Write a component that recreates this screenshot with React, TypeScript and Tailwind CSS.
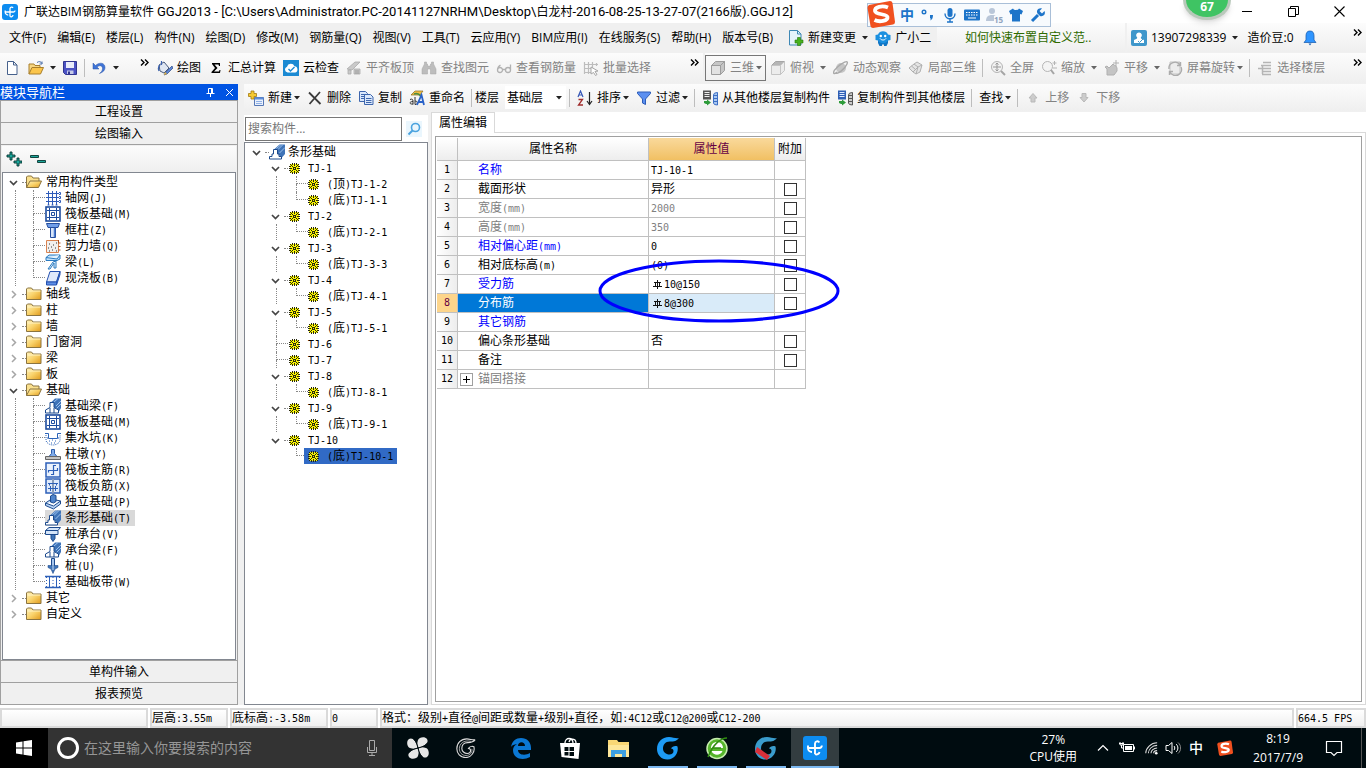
import { Fragment, useState } from 'react'
import type { ReactNode } from 'react'

const UI_FONT = "font-['Open_Sans','Noto_Sans_CJK_SC',sans-serif]"

// ---------- Icons ----------

function Svg({ children, size = 16, box = 16 }: { children: ReactNode; size?: number; box?: number }) {
  return (
    <svg width={size} height={size} viewBox={`0 0 ${box} ${box}`} fill="none" className="block shrink-0" aria-hidden="true">
      {children}
    </svg>
  )
}

const folderFill = (
  <defs>
    <linearGradient id="folder" x1="0" y1="0" x2="1" y2="1">
      <stop offset="0" stopColor="#fff3bd" />
      <stop offset=".5" stopColor="#f9d26a" />
      <stop offset="1" stopColor="#e09a1c" />
    </linearGradient>
  </defs>
)

const icons: Record<string, ReactNode> = {
  app: (
    <>
      <rect width="16" height="16" rx="3" fill="#0d8cf0" />
      <path d="M8 12.5V4.5a1.600 1.600 0 0 1 3-.6M3 8h8.500a1.500 1.500 0 0 0 1.500-1.500M3.200 6.500v1.500a3 3 0 0 0 3 3M8 12.500a2 2 0 0 0 3-1.500" stroke="#fff" strokeWidth="1.300" />
    </>
  ),
  // standard toolbar
  file: <path d="M3.500 1.500h6l3.500 3.500v9.500h-9.500zM9.500 1.500v3.500h3.500" fill="#fff" stroke="#47618c" />,
  open: (
    <>
      <path d="M1 14V4h5l1 1.500h5V8" fill="#f7d681" stroke="#a87f2c" />
      <path d="M1 14 4 7.500h11.500L12.500 14z" fill="#fbc54b" stroke="#a87f2c" />
      <path d="M9 2.500c2-1.500 4-1 5 1m0-2v2.500h-2.500" stroke="#4a6ea8" />
    </>
  ),
  save: (
    <>
      <path d="M1.500 1.500h13v13h-11l-2-2z" fill="#4b52c4" stroke="#31358f" />
      <path d="M4 2h8v6H4z" fill="#e9ecfa" />
      <path d="M5 10.500h6.500V14H5z" fill="#c6cbe8" />
      <path d="M6 11.500h2V14H6z" fill="#31358f" />
    </>
  ),
  undo: <path d="M2 3v6h6L6 7c3-2.500 5.500-1 5.500 1.500 0 2-1 3.500-3 5 4-1.500 5.500-3.500 5.500-6C14 3 9 1.500 4.500 5.500z" fill="#3f74d6" stroke="#2a55a8" strokeWidth=".5" />,
  draw: (
    <>
      <path d="M2 5l5-3 5 6-5 5-4-2z" fill="#dfe6f2" stroke="#47597d" />
      <path d="M3 5c-2 2-2 4-1 6M4.500 1v4" stroke="#3c62b0" strokeWidth="1.200" />
      <path d="M15 6 9 12l-2 3 3-1 6-6z" fill="#5c86d6" stroke="#2b4a85" strokeWidth=".7" />
      <path d="m7 15 3-1-2-2z" fill="#e3b13d" />
    </>
  ),
  sigma: <path d="M4 3h8v3h-1l-.5-1.500H6.500L9.500 8l-3.500 3.500h5L11.500 10h1l-.5 3H3.500v-1L7 8 4 4z" fill="#000" />,
  cloud: (
    <>
      <rect width="16" height="16" fill="#1b8ad3" />
      <path d="M4.500 12.500a3 3 0 0 1-.5-5.800 4 4 0 0 1 7.500-.5 3.200 3.200 0 0 1 .5 6.300z" fill="#fff" />
      <path d="m5.500 9 2 2 4-4" stroke="#1b8ad3" strokeWidth="1.400" />
    </>
  ),
  align: (
    <>
      <path d="M1 9 9 2h5L6 10zM2 10h3v4H2zM8 9h6v5H8z" fill="#c9c9c9" stroke="#ababab" strokeWidth=".8" />
      <path d="M10 10v4M12 10v4" stroke="#999" />
    </>
  ),
  binoc: <path d="M3.500 2h2v2h1v2h3V4h1V2h2v2l2.500 5v5H9.500V9h-3v5H1V9l2.500-5z" fill="#bdbdbd" stroke="#a5a5a5" strokeWidth=".5" />,
  glasses: <path d="M1.500 10a2.500 2.500 0 1 0 5 0 2.500 2.500 0 1 0-5 0 6 6 0 0 1 3-5M6.500 9.500h3m0 .5a2.500 2.500 0 1 0 5 0 2.500 2.500 0 1 0-5 0M14.500 10V4.500" stroke="#b1b1b1" strokeWidth="1.300" />,
  batch: (
    <>
      <path d="M1.500 2v12M5.500 2v12M9.500 2v6M1 4.500h14M1 8.500h8M1 12.500h8M13.500 3v3" stroke="#bdbdbd" strokeWidth="1.200" />
      <path d="m8 7 7 4-3 .5 2 3-1.500 1-2-3L8 14z" fill="#fff" stroke="#a5a5a5" />
    </>
  ),
  cube: (
    <>
      <path d="M1.500 5.500h9v9h-9z" fill="#e2e2e2" stroke="#9d9d9d" />
      <path d="m1.500 5.500 4-4h9l-4 4zM14.500 1.500v9l-4 4v-9z" fill="#c6c6c6" stroke="#9d9d9d" />
    </>
  ),
  topview: (
    <>
      <path d="m1.500 5.500 4-4h9l-4 4z" fill="#b5b5b5" stroke="#a5a5a5" />
      <path d="M1.500 5.500h9v9h-9zM14.500 1.500v9l-4 4v-9" fill="#ececec" stroke="#c4c4c4" />
    </>
  ),
  orbit: (
    <>
      <circle cx="8" cy="8" r="5" fill="#c6c6c6" />
      <path d="M4 12C0 16-1 12 4 7.500S16-1 14 4 4 15 2.500 13" stroke="#a9a9a9" strokeWidth="1.400" />
    </>
  ),
  local3d: <path d="m1 8 5-4 4 3-5 5zM6 4l3-2 5 3-4 2M14 5l-2 7-4 2-3-2M10 7l-2 7M3.500 6l4 3.500M5 12l-4-4" fill="#e4e4e4" stroke="#b0b0b0" />,
  fit: (
    <>
      <circle cx="7" cy="7" r="5.500" fill="#f2f2f2" stroke="#b5b5b5" />
      <path d="M7 3v8M3 7h8M5.500 4.500 7 3l1.500 1.500M5.500 9.500 7 11l1.500-1.500" stroke="#999" />
      <path d="m11 11 4 4" stroke="#a5a5a5" strokeWidth="2" />
    </>
  ),
  zoom: (
    <>
      <circle cx="6.500" cy="6.500" r="5" fill="#f4f4f4" stroke="#b5b5b5" />
      <path d="m10 10 3 4" stroke="#a5a5a5" strokeWidth="2" />
      <path d="M13.500 1v4M11.500 3h4M12 8h4" stroke="#b5b5b5" />
    </>
  ),
  pan: <path d="M3 15V9L1 7l2-1 2 2 4-4 1 1 2 1 1 2v3l-3 4zM12 0v6M9 3h6" fill="#c4c4c4" stroke="#b0b0b0" />,
  rotate: (
    <>
      <path d="M3 2h10v12H3z" fill="#ececec" stroke="#c4c4c4" />
      <path d="M2 9a6 6 0 0 1 11-4M14 7a6 6 0 0 1-11 5M13.500 2v3.500H10M2.500 15v-3.500H6" stroke="#acacac" strokeWidth="1.400" />
    </>
  ),
  floors: <path d="M6 2.500h8M4 5.500h10M1 8.500h13M5 11.500h9M5 14.500h9M5.500 6v8" stroke="#b5b5b5" strokeWidth="1.500" />,
  // component toolbar
  create: (
    <>
      <path d="M6.500 7.500h9v8h-9z" fill="#eaf1fc" stroke="#5577b5" />
      <path d="M6.500 7.500h9v2h-9z" fill="#5d8ddb" />
      <path d="M8 11.500h6M8 13.500h6" stroke="#8fb0e6" />
      <path d="M3 1h3v2.500h2.500v3H6V9H3V6.500H.5v-3H3z" fill="#f6c931" stroke="#a37a10" strokeWidth=".8" />
    </>
  ),
  del: <path d="M2 2.500 13.500 14M13 2 2.500 14" stroke="#3b3b3b" strokeWidth="1.800" />,
  copy: (
    <>
      <path d="M1.500 1.500h6l2 2v8h-8z" fill="#dbe8fb" stroke="#3e66ad" />
      <path d="M3 4.500h4M3 6.500h4M3 8.500h4" stroke="#3e66ad" />
      <path d="M6.500 4.500h6l2.500 2.500v7.500H6.500z" fill="#dbe8fb" stroke="#3e66ad" />
      <path d="M8 8.500h5.500M8 10.500h5.500M8 12.500h5.500" stroke="#3e66ad" />
    </>
  ),
  rename: (
    <>
      <path d="M2 5 6 1h8l-3 4z" fill="#f1bf45" stroke="#8a6a1e" strokeWidth=".7" />
      <path d="M5 4c3-1 6 0 7 3" stroke="#4d8d43" strokeWidth="1.500" />
      <path d="M1 9.500c2-1 3 0 3 1.500v3.500M4 11.500c-4 0-4 3 0 2.500M6 7v7.500c3 .5 3-4 0-3.500" stroke="#333" />
      <path d="m8 15 4.500-10L15 15M9.500 12h4.500" stroke="#2a62c8" strokeWidth="1.800" />
    </>
  ),
  sort: (
    <>
      <path d="M1 7 3.500 1 6 7M2 5h3" stroke="#3557b7" strokeWidth="1.200" />
      <path d="M1.500 9.500h4l-4 5.500h4.500" stroke="#a02c2c" strokeWidth="1.300" />
      <path d="M12.500 2v12M10 11l2.500 3.500L15 11" stroke="#222" strokeWidth="1.200" />
    </>
  ),
  filter: <path d="M1.500 2h13v1.500L9.500 9v5.500l-3-1.500V9l-5-5.500z" fill="#5b8ff0" stroke="#2c5cb8" />,
  copyFrom: (
    <>
      <path d="M1 .5h8v9H1z" fill="#555" />
      <path d="M2.500 2.500h5M2.500 4.500h5M2.500 6.500h5" stroke="#eee" />
      <path d="M15.500 2.500q-4 0-4 2.500v8q0 2 4 2zM12 5.500h4M12 8.500h4M12 11.500h4" fill="#a9c8f2" stroke="#3d6fc4" />
      <path d="M2 11h3V9.500l4 3-4 3V14H4l-2-1z" fill="#2d9b3a" />
    </>
  ),
  copyTo: (
    <>
      <path d="M1 .5h8v9H1z" fill="#2f5fb5" />
      <path d="M2.500 2.500h5M2.500 4.500h5M2.500 6.500h5" stroke="#dce8ff" />
      <path d="M15.500 2.500q-4 0-4 2.500v8q0 2 4 2zM12 5.500h4M12 8.500h4M12 11.500h4" fill="#ccc" stroke="#555" />
      <path d="M2 11h3V9.500l4 3-4 3V14H4l-2-1z" fill="#2d9b3a" />
    </>
  ),
  up: <path d="M8 3.500 12 8h-2v4H6V8H4z" fill="#ccc" stroke="#b9b9b9" />,
  down: <path d="M8 12 4 7.500h2v-4h4v4h2z" fill="#ccc" stroke="#b9b9b9" />,
  change: (
    <>
      <path d="M1.500.5h8l3.500 3.500v11H1.500z" fill="#e6f4fc" stroke="#3e88b5" />
      <path d="M9.500.5v3.500H13" stroke="#3e88b5" />
      <path d="M9.500 7.500h3v2.500H15v3h-2.500v2.500h-3V13H7v-3h2.500z" fill="#48b21f" stroke="#27750c" strokeWidth=".6" />
    </>
  ),
  mascot: (
    <>
      <path d="M3 9h10v4l-1.500 3H9v-1.500H7V16H4.500L3 13z" fill="#1176c4" />
      <path d="M.5 5 3 4.500a5.500 5.500 0 0 1 10 0l2.500.5v5L13 10.500a6 6 0 0 1-10 0L.5 10z" fill="#1b90e0" />
      <circle cx="5.800" cy="6" r="1.200" fill="#fff" />
      <circle cx="10.200" cy="6" r="1.200" fill="#fff" />
      <path d="M5 8.500c1.500 2 4.500 2 6 0" stroke="#fff" />
    </>
  ),
  user: (
    <>
      <rect width="16" height="16" rx="2" fill="#3f97cb" />
      <path d="M8 2.500a2.800 2.800 0 0 1 1.800 5c0 1 .5 1.500 3.200 2.500v3H3v-3c2.700-1 3.200-1.500 3.200-2.500A2.800 2.800 0 0 1 8 2.500" fill="#fff" />
      <path d="m7 11 1.500 1.500L12 9" stroke="#3f97cb" />
    </>
  ),
  bell: (
    <>
      <path d="M8 1c3 0 4 2 4 5v4l2 2.500H2L4 10V6c0-3 1-5 4-5" fill="#2f95ff" stroke="#1f62b3" strokeWidth=".8" />
      <path d="M6.500 13.500 8 15.500l1.500-2z" fill="#1f62b3" />
    </>
  ),
  search: (
    <>
      <rect width="16" height="16" fill="#eaf6fd" />
      <circle cx="9.500" cy="6.500" r="4" stroke="#4aa3df" strokeWidth="1.600" />
      <path d="m6.500 9.500-4 4" stroke="#4aa3df" strokeWidth="2" />
    </>
  ),
  // tree
  folder: (
    <>
      {folderFill}
      <path d="M.5 13.500V3l1-1h4l1.500 2h8v9.500z" fill="url(#folder)" stroke="#8b7440" />
      <path d="M1.500 5h13" stroke="#fff3c4" />
    </>
  ),
  folderOpen: (
    <>
      {folderFill}
      <path d="M.5 13.500V3l1-1h4l1.500 2h6v3" fill="#fae08e" stroke="#8b7440" />
      <path d="M.5 13.500 4 7h11.500l-3 6.500z" fill="url(#folder)" stroke="#8b7440" />
    </>
  ),
  axis: (
    <path d="M3.500 1v14M7.500 1v14M11.500 1v14M1 3.500h13M1 7.500h13M1 11.500h13M14 2.500h1.500v2H14M14 6.500h1.500v2H14M14 10.500h1.500v2H14M2.500 15h2M6.500 15h2M10.500 15h2" stroke="#2f5cba" />
  ),
  raft: (
    <>
      <rect x="1" y="1" width="14" height="14" fill="#fff" stroke="#1d4c9e" strokeWidth="1.600" />
      <path d="M4.500 2v12M11.500 2v12M2 4.500h12M2 11.500h12M6.500 6.500h3v3h-3z" stroke="#1d4c9e" />
    </>
  ),
  column: (
    <>
      <path d="M1.500 1.500h13l-1.500 4H3z" fill="#6f9de8" stroke="#234d9f" />
      <path d="M5.500 5.500h5v10h-5z" fill="#d8e6fa" stroke="#234d9f" />
      <path d="M9.500 6v9" stroke="#4a7bd0" strokeWidth="1.500" />
    </>
  ),
  shear: (
    <>
      <path d="M1.500 2.500h12v12h-12z" fill="#f1efed" stroke="#d9824f" />
      <path d="M4 6h1M8 7h1M11 5h1M6 9h1M3 10h1M10 10h1M7 12h1M4 13h1M11 13h1" stroke="#333" />
      <path d="M13.500 2v3h2M13.500 8.500h2M13.500 12h2" stroke="#b0501c" />
    </>
  ),
  beam: (
    <>
      <path d="M1 3.500 4 1h11v4l-3 1.500H1z" fill="#bfe0fa" stroke="#2a7ac0" />
      <path d="m3 15 5-7 3-1v7H9V9l-4 6zM1 3.500 12 5l3-4" stroke="#2a7ac0" fill="#e5f3fd" />
    </>
  ),
  slab: (
    <>
      <path d="M5 1.500h10L11.500 12h-10z" fill="#dfe9fb" stroke="#2450b0" />
      <path d="M1.500 12h10v3h-10zM11.500 12 15 1.500v3L11.500 15" fill="#5e8ee6" stroke="#2450b0" />
    </>
  ),
  strip: (
    <>
      <path d="M5.500 5 10.500.5H16V10l-3.500 4z" fill="#3f74b8" />
      <path d="m7.500 4.500 4.500-4M10.500 9 16 3.500M9 5.500l5-5" stroke="#9cc0ec" />
      <path d="M.5 15v-2.500H3V10h1.500V5.500h4V10H10v2.500h2.500V15z" fill="#fff" stroke="#1c4a8d" />
    </>
  ),
  fbeam: (
    <>
      <path d="M6 4.500 10 .5h6V10l-2.500 4.500H9z" fill="#3f74b8" />
      <path d="m9 4 4-3.500M11 8l5-5M11 11l5-5" stroke="#9cc0ec" />
      <path d="M.5 15v-3L5 9.500v-5h4v5l4.500 2.500v3z" fill="#fff" stroke="#1c4a8d" />
      <path d="M5 10v5M9 10v5" stroke="#1c4a8d" />
    </>
  ),
  pit: (
    <>
      <path d="M0 3.500h3.500v5h9v-5H16" stroke="#2b63b8" />
      <path d="M1 5v5c0 3 4 5 7 5s7-2 7-5V5" stroke="#2b63b8" strokeDasharray="1 1" />
      <path d="M4 11h1M7 10h1M10 11h1M6 13h1M9 13h1M2 8h1M13 8h1" stroke="#2b63b8" />
    </>
  ),
  pier: (
    <>
      <path d="M6.500 3.500h3v4l2.500 3H4l2.500-3z" fill="#7fabea" stroke="#2b5cab" />
      <path d="M.5 10.500h15v3H.5z" fill="#c4c4c4" stroke="#666" />
    </>
  ),
  rebarMain: (
    <>
      <rect x="1" y="1" width="14" height="14" fill="#eaf2fd" stroke="#2c5fb8" strokeWidth="1.500" />
      <path d="M8.500 3v10M3 8.500h10M8 3.500h3M3.500 8v2.500M8.500 12.500H6M12.500 8.500V6" stroke="#2c5fb8" strokeWidth="1.200" />
    </>
  ),
  rebarNeg: (
    <>
      <rect x="1" y="1" width="14" height="14" fill="#dfeafb" stroke="#2c5fb8" strokeWidth="1.500" />
      <path d="M8 1v14" stroke="#8a9cb8" strokeWidth="2" />
      <path d="M3 5.500h10M3 10.500h10M4.500 5.500v2M11.500 5.500v2M5.500 8v5M10.500 8v5" stroke="#2c5fb8" />
    </>
  ),
  isolated: (
    <>
      <path d="m.5 9 6-4 9 2-7 5zM.5 9v2.500l8 3.500 7-5V7" fill="#b9d4f5" stroke="#1c4a8d" />
      <path d="M5.500 2 8 .5l3 1v6L8.500 9 5.500 8z" fill="#4f84cc" stroke="#1c4a8d" />
    </>
  ),
  cap: (
    <>
      <path d="M.5 4.500 4 1.500h11.500L13 4.500v4H.5z" fill="#d5e5f9" stroke="#1c4a8d" />
      <path d="M.5 4.500H13" stroke="#1c4a8d" />
      <path d="M6 8.500h4v4l-2 3-2-3z" fill="#3f74b8" stroke="#1c4a8d" />
    </>
  ),
  pile: (
    <>
      <path d="M6.500.5h3v8h-3z" fill="#7eaae4" stroke="#1c4a8d" />
      <path d="M3 7.500h10v2l-3 1.500-2 4.500L6 11 3 9.500z" fill="#3f74b8" stroke="#1c4a8d" strokeWidth=".6" />
      <path d="M8 1v11" stroke="#cfe2f8" />
    </>
  ),
  band: (
    <>
      <path d="M0 2.500h16M0 13.500h16" stroke="#2c5fb8" strokeWidth="1.500" />
      <path d="M4.500 3v10M11.500 3v10" stroke="#2c5fb8" />
      <path d="M8 3v10M1.500 3v10M14.500 3v10" stroke="#2c5fb8" strokeDasharray="1 2" />
    </>
  ),
}

function Icon({ name, size }: { name: string; size?: number }) {
  return <Svg size={size}>{icons[name]}</Svg>
}

// k = black, y = yellow
const gearRows = [
  '...k.k.k...',
  '.k.kykyk.k.',
  '..kyykyyk..',
  'kkykyyykykk',
  '.yyykkkyyy.',
  'kkkykykykkk',
  '.yyykkkyyy.',
  'kkykyyykykk',
  '..kyykyyk..',
  '.k.kykyk.k.',
  '...k.k.k...',
]

function gearPath(color: string) {
  return gearRows.map((row, y) => [...row].map((c, x) => (c === color ? `M${x} ${y}h1v1h-1z` : '')).join('')).join('')
}

const gearDark = gearPath('k')
const gearYellow = gearPath('y')

function Gear() {
  return (
    <Svg size={11} box={11}>
      <path d="M2 1h7l1 1v7l-1 1H2L1 9V2z" fill="#fffb00" />
      <path d={gearYellow} fill="#fffb00" />
      <path d={gearDark} fill="#2a2a10" />
    </Svg>
  )
}

function Chevron({ open }: { open: boolean }) {
  return (
    <Svg size={9} box={9}>
      {open ? <path d="m1 3 3.500 3.500L8 3" stroke="#444" strokeWidth="1.700" /> : <path d="m3 1 3.500 3.500L3 8" stroke="#a6a6a6" strokeWidth="1.500" />}
    </Svg>
  )
}

function Caret({ color = '#222' }: { color?: string }) {
  return (
    <svg width="6" height="4" viewBox="0 0 6 4" className="block shrink-0" aria-hidden="true">
      <path d="M0 0h6L3 3.500z" fill={color} />
    </svg>
  )
}

function More() {
  return (
    <button aria-label="更多" className="ml-auto mr-1 self-start pt-[6px]">
      <svg width="9" height="7" viewBox="0 0 9 7" fill="none" className="block">
        <path d="m1 .5 3 3-3 3m4-6 3 3-3 3" stroke="#000" strokeWidth="1.400" />
      </svg>
    </button>
  )
}

function Sogou({ size }: { size: number }) {
  return (
    <Svg size={size} box={28}>
      <path d="M2 5 23 1q2 0 2.500 2L28 22q0 2-2 2.500L6 28q-2 0-2.500-2L.5 8q0-2 1.500-3" fill="#f0501f" />
      <path d="M21 7.500C15 5 7.500 7 8 11c.5 4 12 2.500 12.500 6 .5 4-8 5.500-13 3" stroke="#fff" strokeWidth="3.800" />
    </Svg>
  )
}

// Half-width characters run at half the width of the Chinese ones
function Text({ children }: { children: string }) {
  return (
    <>
      {children.split(/([\x20-\x7e]+)/).map((part, i) =>
        i % 2 ? (
          <span key={i} className="whitespace-pre font-['DejaVu_Sans_Mono',monospace] text-[10px]">
            {part}
          </span>
        ) : (
          <Fragment key={i}>{part}</Fragment>
        ),
      )}
    </>
  )
}

// ---------- Toolbars ----------

interface ToolProps {
  icon?: string
  label: string
  caret?: 'near' | 'far'
  disabled?: boolean
}

function Tool({ icon, label, caret, disabled }: ToolProps) {
  return (
    <button className={`flex h-6 shrink-0 items-center whitespace-nowrap pl-1 pr-[3px] ${disabled ? 'text-[#838383]' : 'text-black'}`}>
      {icon && (
        <span className="mr-1">
          <Icon name={icon} />
        </span>
      )}
      {label}
      {caret && (
        <span className={caret === 'near' ? 'ml-[2px]' : 'ml-[6px]'}>
          <Caret color={disabled ? '#666' : '#222'} />
        </span>
      )}
    </button>
  )
}

function Sep() {
  return <span className="mx-[3px] h-[18px] w-px shrink-0 bg-[#bdbdbd]" />
}

const bar = 'flex items-center bg-linear-to-b from-[#fcfcfc] to-[#efefef]'

function TitleBar() {
  return (
    <header className="relative flex h-[23px] shrink-0 items-center bg-white pl-[2px]">
      <Icon name="app" />
      <h1 className="ml-[6px] flex items-baseline whitespace-pre">
        <span>广联达BIM钢筋算量软件 </span>
        <span className="font-['Roboto',sans-serif] text-[13px]">{'GGJ2013 - [C:\\Users\\Administrator.PC-20141127NRHM\\Desktop\\'}</span>
        <span>白龙村</span>
        <span className="font-['Roboto',sans-serif] text-[13px]">-2016-08-25-13-27-07(2166</span>
        <span>版</span>
        <span className="font-['Roboto',sans-serif] text-[13px]">).GGJ12]</span>
      </h1>

      {/* input method bar */}
      <div className="absolute right-[315px] top-[3px] z-10 flex h-6 items-center gap-[6px] border border-[#a9bfd8] bg-[#f7fafd] pl-8 pr-1">
        <div className="absolute -left-px -top-1">
          <Sogou size={28} />
        </div>
        <span className="text-[14px] font-bold leading-4 text-[#1d74c9]">中</span>
        <Svg>
          <circle cx="4" cy="5" r="1.800" stroke="#1d74c9" strokeWidth="1.400" />
          <path d="M10 8h3c0 3-1 5-3 5.500 1-1.500 1-2 0-2.500z" fill="#1d74c9" />
        </Svg>
        <Svg>
          <rect x="5.500" y="1" width="5" height="9" rx="2.500" fill="#1d74c9" />
          <path d="M3 6.500c0 7 10 7 10 0M8 12v3M5 15h6" stroke="#1d74c9" strokeWidth="1.400" />
        </Svg>
        <Svg>
          <rect y="2.500" width="16" height="11" rx="1" fill="#1d74c9" />
          <path d="M2 5.500h12M2 8h12" stroke="#fff" strokeWidth="1.200" strokeDasharray="1.500 1" />
          <path d="M4 11h8" stroke="#fff" />
        </Svg>
        <div className="relative">
          <Svg>
            <circle cx="6" cy="4" r="3" fill="#b9c6d8" />
            <path d="M0 14c0-4 2-6 6-6s5 2 5 3v3z" fill="#b9c6d8" />
          </Svg>
          <span className="absolute -bottom-px left-2 bg-[#f7fafd] text-[8px] font-bold leading-[8px] text-[#8fa3bd]">15</span>
        </div>
        <Svg>
          <path d="m1 4 4-2.500c1 2 5 2 6 0L15 4l-1.500 3.500L12 7v7.500H4V7l-1.500.5z" fill="#1d74c9" />
        </Svg>
        <Svg>
          <path d="m2 14 6-6" stroke="#1d74c9" strokeWidth="3" />
          <path d="M14.500 4 12 6.500 9.500 4 12 1.500C8 .5 6 4 7.500 6.500L10 9c3 1 6-1.500 4.500-5" fill="#1d74c9" />
        </Svg>
      </div>

      {/* floating meter */}
      <div className="absolute right-[135px] top-0 z-10 flex h-5 w-12 items-center justify-center rounded-[0_0_24px_24px/0_0_20px_20px] border-[3px] border-t-0 border-[#b9c9bb] bg-[#3fc463] pb-1 text-[12px] font-bold leading-3 text-white shadow-md">
        67
      </div>

      <div className="ml-auto mr-1 flex">
        <button aria-label="最小化" className="flex w-[46px] justify-center">
          <Svg size={11} box={11}>
            <path d="M0 5.500h10" stroke="#000" />
          </Svg>
        </button>
        <button aria-label="还原" className="flex w-[46px] justify-center">
          <Svg size={11} box={11}>
            <path d="M.5 2.500h7v8h-7zM2.500 2.500v-2h8v8H8" stroke="#000" />
          </Svg>
        </button>
        <button aria-label="关闭" className="flex w-[46px] justify-center">
          <Svg size={11} box={11}>
            <path d="m.5.5 10 10m0-10-10 10" stroke="#000" strokeWidth="1.100" />
          </Svg>
        </button>
      </div>
    </header>
  )
}

const menus = ['文件(F)', '编辑(E)', '楼层(L)', '构件(N)', '绘图(D)', '修改(M)', '钢筋量(Q)', '视图(V)', '工具(T)', '云应用(Y)', 'BIM应用(I)', '在线服务(S)', '帮助(H)', '版本号(B)']

function MenuBar() {
  return (
    <nav className="flex h-[29px] shrink-0 items-stretch bg-[#f0f0f0]">
      <div className="flex w-[937px] shrink-0 items-center gap-[11px] bg-[#f0f0f0] pl-[9px]">
        {menus.map((m) => (
          <button key={m} className="whitespace-nowrap">
            {m}
          </button>
        ))}
        <div className="flex items-center">
          <Tool icon="change" label="新建变更" caret="far" />
          <Tool icon="mascot" label="广小二" />
        </div>
      </div>
      <div className={`${bar} w-[188px] shrink-0 pl-7`}>
        <a href="#help" className="text-[#2f6b00]">
          如何快速布置自定义范..
        </a>
      </div>
      <div className={`${bar} ml-[2px] flex-1`}>
        <Tool icon="user" label="13907298339" caret="far" />
        <button className="ml-[6px] whitespace-nowrap">造价豆:0</button>
        <button aria-label="通知" className="ml-2">
          <Icon name="bell" />
        </button>
        <More />
      </div>
    </nav>
  )
}

function MainToolbar() {
  return (
    <div className="flex h-[32px] shrink-0 items-stretch pb-px pt-px">
      <div className={`${bar} w-[153px] shrink-0 pl-1`}>
        <button aria-label="新建">
          <Icon name="file" />
        </button>
        <button aria-label="打开" className="ml-2 flex items-center gap-[6px]">
          <Icon name="open" />
          <Caret />
        </button>
        <button aria-label="保存" className="ml-[6px] mr-[3px]">
          <Icon name="save" />
        </button>
        <Sep />
        <button aria-label="撤销" className="ml-[3px] flex items-center gap-[6px]">
          <Icon name="undo" />
          <Caret />
        </button>
        <More />
      </div>
      <div className={`${bar} w-[550px] shrink-0`}>
        <Tool icon="draw" label="绘图" />
        <Tool icon="sigma" label="汇总计算" />
        <Tool icon="cloud" label="云检查" />
        <Tool icon="align" label="平齐板顶" disabled />
        <Tool icon="binoc" label="查找图元" disabled />
        <Tool icon="glasses" label="查看钢筋量" disabled />
        <Tool icon="batch" label="批量选择" disabled />
        <More />
      </div>
      <div className={`${bar} ml-[2px] flex-1`}>
        <div className="flex border border-[#777]">
          <Tool icon="cube" label="三维" caret="near" disabled />
        </div>
        <Tool icon="topview" label="俯视" caret="far" disabled />
        <Tool icon="orbit" label="动态观察" disabled />
        <Tool icon="local3d" label="局部三维" disabled />
        <Sep />
        <Tool icon="fit" label="全屏" disabled />
        <Tool icon="zoom" label="缩放" caret="far" disabled />
        <Tool icon="pan" label="平移" caret="far" disabled />
        <Tool icon="rotate" label="屏幕旋转" caret="near" disabled />
        <Sep />
        <Tool icon="floors" label="选择楼层" disabled />
        <More />
      </div>
    </div>
  )
}

function ComponentToolbar() {
  return (
    <div className={`${bar} h-[27px] shrink-0`}>
      <Tool icon="create" label="新建" caret="near" />
      <Tool icon="del" label="删除" />
      <Tool icon="copy" label="复制" />
      <Tool icon="rename" label="重命名" />
      <Sep />
      <label htmlFor="floor" className="shrink-0">
        楼层
      </label>
      <div className="relative ml-[6px] flex h-[23px] w-[61px] shrink-0 items-center bg-white">
        <select id="floor" className="h-full w-full appearance-none bg-transparent pl-[2px] outline-none">
          <option>基础层</option>
        </select>
        <span className="pointer-events-none absolute right-1">
          <Caret />
        </span>
      </div>
      <Sep />
      <Tool icon="sort" label="排序" caret="near" />
      <Tool icon="filter" label="过滤" caret="near" />
      <Sep />
      <Tool icon="copyFrom" label="从其他楼层复制构件" />
      <Tool icon="copyTo" label="复制构件到其他楼层" />
      <Sep />
      <Tool label="查找" caret="near" />
      <Sep />
      <Tool icon="up" label="上移" disabled />
      <Tool icon="down" label="下移" disabled />
    </div>
  )
}

// ---------- Trees ----------

// Dotted connector from the parent's line to a child
function Elbow({ last }: { last?: boolean }) {
  return (
    <span className="flex h-4 w-3 shrink-0 flex-col">
      <span className="h-2 border-b border-l border-dotted border-[#888]" />
      <span className={last ? 'h-2' : 'h-2 border-l border-dotted border-[#888]'} />
    </span>
  )
}

function Dots() {
  return <span className="w-1 shrink-0 border-t border-dotted border-[#888]" />
}

interface Category {
  label: string
  children?: [string, string][]
}

const categories: Category[] = [
  {
    label: '常用构件类型',
    children: [
      ['axis', '轴网(J)'],
      ['raft', '筏板基础(M)'],
      ['column', '框柱(Z)'],
      ['shear', '剪力墙(Q)'],
      ['beam', '梁(L)'],
      ['slab', '现浇板(B)'],
    ],
  },
  { label: '轴线' },
  { label: '柱' },
  { label: '墙' },
  { label: '门窗洞' },
  { label: '梁' },
  { label: '板' },
  {
    label: '基础',
    children: [
      ['fbeam', '基础梁(F)'],
      ['raft', '筏板基础(M)'],
      ['pit', '集水坑(K)'],
      ['pier', '柱墩(Y)'],
      ['rebarMain', '筏板主筋(R)'],
      ['rebarNeg', '筏板负筋(X)'],
      ['isolated', '独立基础(P)'],
      ['strip', '条形基础(T)'],
      ['cap', '桩承台(V)'],
      ['fbeam', '承台梁(F)'],
      ['pile', '桩(U)'],
      ['band', '基础板带(W)'],
    ],
  },
  { label: '其它' },
  { label: '自定义' },
]

function NavButton({ children }: { children: string }) {
  return <button className="block h-[22px] w-full border border-t-0 border-[#a0a0a0] bg-[#f0f0f0] leading-5">{children}</button>
}

function ModulePanel() {
  return (
    <aside className="flex w-[238px] shrink-0 flex-col bg-[#f0f0f0]">
      <div className="flex h-4 items-center bg-[#0054e3] text-white">
        <h2 className="text-[13px] leading-4">模块导航栏</h2>
        <button aria-label="固定" className="ml-auto">
          <Svg size={9} box={9}>
            <path d="M2.500.5h4v5h-4zM.5 5.500h8M4.500 5.500V9M5.500.5v5" stroke="#fff" />
          </Svg>
        </button>
        <button aria-label="关闭" className="ml-[10px] mr-1">
          <Svg size={9} box={9}>
            <path d="m1 1 7 7m0-7L1 8" stroke="#fff" />
          </Svg>
        </button>
      </div>
      <div className="border-t border-[#a0a0a0]">
        <NavButton>工程设置</NavButton>
        <NavButton>绘图输入</NavButton>
      </div>
      <div className="flex min-h-0 flex-1 flex-col border border-t-0 border-[#a0a0a0] px-px pt-px">
        <div className={`${bar} h-[26px] gap-2 pl-1`}>
          <button aria-label="全部展开">
            <Svg size={16}>
              <path d="M4 1h2v3h3v2H6v3H4V6H1V4h3zM11 7h2v3h3v2h-3v3h-2v-3H8v-2h3z" fill="#1ba79b" stroke="#04342f" strokeWidth=".9" />
            </Svg>
          </button>
          <button aria-label="全部折叠">
            <Svg size={16}>
              <path d="M.5 4.500h8v2h-8zM7.500 9.500h8v2h-8z" fill="#1ba79b" stroke="#04342f" strokeWidth=".9" />
            </Svg>
          </button>
        </div>
        <ul className="flex-1 overflow-hidden border border-[#828790] bg-white pt-px">
          {categories.map((c) => (
            <li key={c.label}>
              <div className="flex h-4 items-center">
                <span className="flex w-[19px] justify-center pl-px">
                  <Chevron open={!!c.children} />
                </span>
                <Dots />
                <Icon name={c.children ? 'folderOpen' : 'folder'} />
                <span className="ml-1">{c.label}</span>
              </div>
              {c.children?.map(([icon, label], i, list) => (
                <div key={label} className="ml-3 flex h-4 items-center border-l border-dotted border-[#888] pl-[17px]">
                  <Elbow last={i === list.length - 1} />
                  <span className={`flex h-4 items-center pr-1 leading-4 ${icon === 'strip' ? 'bg-[#d9d9d9]' : ''}`}>
                    <Icon name={icon} />
                    <span className="ml-1 whitespace-nowrap">
                      <Text>{label}</Text>
                    </span>
                  </span>
                </div>
              ))}
            </li>
          ))}
        </ul>
      </div>
      <NavButton>单构件输入</NavButton>
      <NavButton>报表预览</NavButton>
    </aside>
  )
}

const components: { name: string; units: string[] }[] = [
  { name: 'TJ-1', units: ['(顶)TJ-1-2', '(底)TJ-1-1'] },
  { name: 'TJ-2', units: ['(底)TJ-2-1'] },
  { name: 'TJ-3', units: ['(底)TJ-3-3'] },
  { name: 'TJ-4', units: ['(底)TJ-4-1'] },
  { name: 'TJ-5', units: ['(底)TJ-5-1'] },
  { name: 'TJ-6', units: [] },
  { name: 'TJ-7', units: [] },
  { name: 'TJ-8', units: ['(底)TJ-8-1'] },
  { name: 'TJ-9', units: ['(底)TJ-9-1'] },
  { name: 'TJ-10', units: ['(底)TJ-10-1'] },
]

function ComponentPanel() {
  const [query, setQuery] = useState('')

  return (
    <section className="mt-1 flex w-[184px] shrink-0 flex-col bg-white">
      <div className="flex h-[27px] items-center pl-px">
        <input
          aria-label="搜索构件"
          value={query}
          onChange={(e) => setQuery(e.target.value)}
          placeholder="搜索构件..."
          className="h-6 w-[157px] border border-[#777] px-[2px] text-[12px] outline-none placeholder:text-[#777]"
        />
        <button aria-label="搜索" className="ml-1">
          <Icon name="search" />
        </button>
      </div>
      <ul className="flex-1 overflow-hidden border border-[#828790] pt-px">
        <li className="flex h-4 items-center pl-[7px]">
          <Chevron open />
          <span className="w-1" />
          <Dots />
          <Icon name="strip" />
          <span className="ml-[3px]">条形基础</span>
        </li>
        {components.map(({ name, units }, index) => (
          <li key={name}>
            <div className="flex h-4 items-center">
              {units.length ? (
                <span className="flex w-[44px] items-center pl-[26px]">
                  <Chevron open />
                  <span className="w-1" />
                  <Dots />
                </span>
              ) : (
                <span className="w-[44px] pl-[31px]">
                  <Elbow />
                </span>
              )}
              <Gear />
              <span className="ml-2">
                <Text>{name}</Text>
              </span>
            </div>
            {units.map((u, i) => (
              <div key={u} className={`ml-[31px] flex h-4 items-center border-l border-dotted pl-[19px] ${index === components.length - 1 ? 'border-transparent' : 'border-[#888]'}`}>
                <Elbow last={i === units.length - 1} />
                <span className={`-ml-1 flex h-4 items-center pl-1 pr-1 leading-4 ${u === '(底)TJ-10-1' ? 'bg-[#316ac5]' : ''}`}>
                  <Gear />
                  <span className="ml-2 whitespace-nowrap">
                    <Text>{u}</Text>
                  </span>
                </span>
              </div>
            ))}
          </li>
        ))}
      </ul>
    </section>
  )
}

// ---------- Property grid ----------

type Tone = 'key' | 'normal' | 'muted'

interface Prop {
  name: string
  value: string
  tone: Tone
  check?: boolean
  rebar?: boolean
  group?: boolean
}

const props: Prop[] = [
  { name: '名称', value: 'TJ-10-1', tone: 'key' },
  { name: '截面形状', value: '异形', tone: 'normal', check: true },
  { name: '宽度(mm)', value: '2000', tone: 'muted', check: true },
  { name: '高度(mm)', value: '350', tone: 'muted', check: true },
  { name: '相对偏心距(mm)', value: '0', tone: 'key', check: true },
  { name: '相对底标高(m)', value: '(0)', tone: 'normal', check: true },
  { name: '受力筋', value: '10@150', tone: 'key', check: true, rebar: true },
  { name: '分布筋', value: '8@300', tone: 'key', check: true, rebar: true },
  { name: '其它钢筋', value: '', tone: 'key' },
  { name: '偏心条形基础', value: '否', tone: 'normal', check: true },
  { name: '备注', value: '', tone: 'normal', check: true },
  { name: '锚固搭接', value: '', tone: 'muted', group: true },
]

const toneClass: Record<Tone, string> = {
  key: 'text-[#0000ff]',
  normal: 'text-black',
  muted: 'text-[#808080]',
}

const cell = 'h-[19px] border-b border-r border-[#c0c0c0] p-0 leading-4'
const headCell = 'h-[23px] border-b border-r border-[#c0c0c0] bg-linear-to-b from-white to-[#ededed] p-0 font-normal'

function PropertyTable() {
  const [checked, setChecked] = useState<Record<string, boolean>>({})
  const selected = 7

  return (
    <table className="w-[369px] table-fixed border-separate border-spacing-0">
      <colgroup>
        <col className="w-[21px]" />
        <col className="w-[191px]" />
        <col className="w-[126px]" />
        <col className="w-[31px]" />
      </colgroup>
      <thead>
        <tr>
          <th className={headCell} />
          <th className={headCell}>属性名称</th>
          <th className="h-[23px] border-b border-r border-[#c0c0c0] bg-linear-to-b from-[#f9d99b] to-[#f1c062] p-0 font-normal text-[#660044]">属性值</th>
          <th className={headCell}>附加</th>
        </tr>
      </thead>
      <tbody>
        {props.map((p, i) => (
          <tr key={p.name}>
            <td className={`${cell} text-center ${i === selected ? 'bg-[#fdd58b] text-[#660044]' : 'bg-linear-to-r from-white to-[#ededed]'}`}>
              <span className="flex h-4 items-center justify-center">
                <Text>{String(i + 1)}</Text>
              </span>
            </td>
            <td className={`${cell} ${i === selected ? 'bg-[#0078d7] text-white' : toneClass[p.tone]}`}>
              <span className="flex h-4 items-center">
                <span className="flex w-5 shrink-0 pl-[2px]">
                  {p.group && (
                    <button aria-label="展开" className="block size-[13px] border border-[#a0a0a0] bg-white p-[2px]">
                      <Svg size={7} box={7}>
                        <path d="M3.500 0v7M0 3.500h7" stroke="#000" />
                      </Svg>
                    </button>
                  )}
                </span>
                <span>
                  <Text>{p.name}</Text>
                </span>
              </span>
            </td>
            <td className={`${cell} pl-[2px] ${i === selected ? 'bg-[#d9ebf9]' : ''} ${p.tone === 'muted' ? 'text-[#808080]' : 'text-black'}`}>
              <span className="flex h-4 items-center">
                {p.rebar && (
                  <span className="ml-[2px] mr-[2px]">
                    <Svg size={9} box={9}>
                      <path d="M4.500 0v9M2.500 2v5M6.500 2v5M1 2.500h7M0 6.500h9" stroke="#111" />
                    </Svg>
                  </span>
                )}
                <span>
                  <Text>{p.value}</Text>
                </span>
              </span>
            </td>
            <td className={cell}>
              {p.check && (
                <input
                  type="checkbox"
                  aria-label={`${p.name} 附加`}
                  checked={!!checked[p.name]}
                  onChange={(e) => setChecked({ ...checked, [p.name]: e.target.checked })}
                  className="mx-auto block size-[13px] appearance-none border border-[#333] bg-white checked:bg-[#333]"
                />
              )}
            </td>
          </tr>
        ))}
      </tbody>
    </table>
  )
}

function PropertyPanel() {
  return (
    <section className="ml-[3px] mt-px flex flex-1 flex-col">
      <div className="flex h-[21px] border-b border-[#d9d9d9] bg-white">
        <button className="h-[21px] w-[64px] border border-b-0 border-[#d9d9d9] bg-white">属性编辑</button>
      </div>
      <div className="flex flex-1 border-x border-b border-[#d9d9d9] bg-white px-[3px] pb-[2px] pt-[3px]">
        <div className="relative flex-1 border border-[#a0a0a0] p-px">
          <PropertyTable />
          {/* highlight round the two rebar rows */}
          <svg width="242" height="64" viewBox="0 0 242 64" fill="none" className="pointer-events-none absolute left-[162px] top-[122px]">
            <ellipse cx="121" cy="32" rx="119" ry="30" stroke="#0000ff" strokeWidth="3" />
          </svg>
        </div>
      </div>
    </section>
  )
}

// ---------- Bottom bars ----------

const statusCell = 'h-5 border-2 border-[#dadada] bg-linear-to-b from-white to-[#f0f0f0] leading-4 whitespace-nowrap overflow-hidden'

function StatusBar() {
  return (
    <footer className="flex shrink-0 gap-[2px] bg-white pt-[3px]">
      <div className={`${statusCell} w-[148px]`} />
      <div className={`${statusCell} w-[78px]`}>
        <Text>层高:3.55m</Text>
      </div>
      <div className={`${statusCell} w-[98px]`}>
        <Text>底标高:-3.58m</Text>
      </div>
      <div className={`${statusCell} w-[48px]`}>
        <Text>0</Text>
      </div>
      <div className={`${statusCell} flex-1`}>
        <Text>格式：级别+直径@间距或数量+级别+直径，如:4C12或C12@200或C12-200</Text>
      </div>
      <div className={`${statusCell} w-[70px]`}>
        <Text>664.5 FPS</Text>
      </div>
    </footer>
  )
}

const glodon = 'M23 2c-2 3-5 3.500-9 3.500-5 0-7 3.500-7 7s3 6 6.500 6c2.500 0 4-1.500 4-3.500 0-1.500-1-2.500-2.500-2.500 1-2 4-3 6.500-2 1.500 6-3 13-10 13C5 23.500 1 18.500 1 13 1 6 6 1 13 1c4 0 7 2 10 1'

const apps: { name: string; art: ReactNode; state?: 'open' | 'active' }[] = [
  {
    name: 'Edge',
    art: <path d="M2 11C3 5 7 2 12 2c6 0 10 4 10 10v2H9c0 5 7 6 12 3v4c-7 4-17 2-17-7 0-3 2-5 4-6-3 .5-5 1-6 3m7-1h7c0-5-7-5-7 0" fill="#0b78d4" />,
  },
  {
    name: '应用商店',
    art: (
      <>
        <path d="M2 7h20l-1.500 16-17-2z" fill="#fff" />
        <path d="M7 7c0-6 8-6 8 0M11 6c1-4 7-4 7 1" stroke="#fff" strokeWidth="1.300" />
        <path d="M6.500 11h4v4h-4zM11.500 11H16v4h-4.500zM6.500 16h4v3.500h-4zM11.500 16H16v4h-4.500z" fill="#000c0f" />
      </>
    ),
  },
  {
    name: '文件资源管理器',
    art: (
      <>
        <path d="M1 4h9l1.500 2H22v15H1z" fill="#f8d775" />
        <path d="M1 9h21v12H1z" fill="#fde79a" />
        <path d="M4 21v-7h15v7h-4v-3H8v3z" fill="#3d9fe0" />
      </>
    ),
  },
  {
    name: 'Glodon 1',
    state: 'open',
    art: <path d={glodon} fill="#1d9bf5" />,
  },
  {
    name: '360',
    state: 'open',
    art: (
      <>
        <circle cx="12" cy="12.500" r="10" fill="#56b52c" stroke="#c6edaf" strokeWidth="1.500" />
        <path d="M6 12h12c0-8-12-8-12 0M6.500 15c2 5 9 5 11 0z" fill="#fff" />
        <path d="M8 12h8M22 2c-6 0-14 6-19 19" stroke="#2e8c10" strokeWidth="1.500" />
      </>
    ),
  },
  {
    name: 'Glodon 2',
    state: 'open',
    art: (
      <>
        <path d={glodon} fill="#3a9ccc" />
        <path d="m3 11 13 9-3 4-12-8z" fill="#d9303a" />
      </>
    ),
  },
  {
    name: '广联达BIM',
    state: 'active',
    art: (
      <>
        <rect width="24" height="24" rx="3" fill="#0d8cf0" />
        <path d="M12 18V7.500a2.300 2.300 0 0 1 4.300-1M5 12h11.500a2.300 2.300 0 0 0 2.300-2.500M5 9.500V12a4 4 0 0 0 4 4M12 18a3 3 0 0 0 4.500-2" stroke="#fff" strokeWidth="1.900" />
      </>
    ),
  },
]

function Taskbar() {
  return (
    <div className="flex h-10 shrink-0 items-stretch bg-[#000c10] text-white">
      <button aria-label="开始" className="flex w-12 items-center justify-center bg-black">
        <Svg>
          <path d="m0 2.500 6.500-1v6H0zM7.500 1.300 16 0v7.500H7.500zM0 8.500h6.500v6l-6.500-1zM7.500 8.500H16V16l-8.500-1.200z" fill="#fff" />
        </Svg>
      </button>
      <div className="flex w-[344px] items-center bg-[#333] pl-[9px] pr-3">
        <span className="size-[22px] shrink-0 rounded-full border-[3px] border-white" />
        <input aria-label="搜索" placeholder="在这里输入你要搜索的内容" className="ml-[5px] min-w-0 flex-1 bg-transparent text-[14px] outline-none placeholder:text-[#969696]" />
        <Svg>
          <path d="M5.500.5h5v10h-5zM3.500 7v5.500h9V7M8 12.500v3M5 15.500h6" stroke="#aaa" />
        </Svg>
      </div>
      <button aria-label="风扇" className="ml-[2px] flex w-12 items-center justify-center">
        <Svg size={24} box={24}>
          <path d="M11.500 11.500C10 4 6 1 3 3S1 11 4 12s6 1 7.500-.5M12.500 11.500C20 10 23 6 21 3s-8-2-9 1-1 6 .5 7.500M12.500 12.500C14 20 18 23 21 21s2-8-1-9-6-1-7.500.5M11.500 12.500C4 14 1 18 3 21s8 2 9-1 1-6-.5-7.500" fill="#e6e6e6" />
          <path d="M12 12C11 7 9 4 7 2.500M12 12c5-1 8-3 9.500-5M12 12c1 5 3 8 5 9.500M12 12c-5 1-8 3-9.500 5" stroke="#000c10" />
        </Svg>
      </button>
      <button aria-label="广联达" className="mr-[7px] flex w-12 items-center justify-center">
        <Svg size={20} box={24}>
          <path d={glodon} stroke="#ddd" strokeWidth="1.300" />
          <path d="M18 4c-9-2-14 3-14 9 0 4 3 8 8 8s8-4 7-8" stroke="#bbb" />
        </Svg>
      </button>
      <div className="flex gap-px">
        {apps.map((a) => (
          <button key={a.name} aria-label={a.name} className={`relative flex w-12 items-center justify-center ${a.state === 'active' ? 'bg-[#333d40]' : ''}`}>
            <Svg size={24} box={24}>
              {a.art}
            </Svg>
            {a.state && <span className={`absolute bottom-0 h-[2px] bg-[#7cb8f0] ${a.state === 'active' ? 'inset-x-0' : 'inset-x-1'}`} />}
          </button>
        ))}
      </div>

      <div className="ml-auto flex items-center">
        <div className="text-center leading-[17px]">
          27%
          <br />
          CPU使用
        </div>
        <button aria-label="显示隐藏的图标" className="ml-5">
          <Svg size={12} box={12}>
            <path d="m1 8.500 5-5 5 5" stroke="#fff" strokeWidth="1.200" />
          </Svg>
        </button>
        <span className="ml-[10px]">
          <Svg>
            <path d="M4.500 4.500h10v7h-10zM15.500 6.500v3M1 2v3h3V2M0 3.500h5M2.500 5v3H5" stroke="#fff" />
            <path d="M6 6h7v4H6z" fill="#fff" />
          </Svg>
        </span>
        <span className="ml-[9px]">
          <Svg size={14}>
            <path d="M2 14C2 8 8 2 15 2M5 14c0-4 4-9 10-9M8 14c0-3 3-6 7-6M11 14c0-2 2-3 4-3" stroke="#ddd" strokeWidth="1.200" />
            <circle cx="14" cy="14" r="1.500" fill="#fff" />
          </Svg>
        </span>
        <span className="ml-[7px]">
          <Svg>
            <path d="M1 5.500h2.500L7 2.500v11l-3.500-3H1zM9 6c1 1 1 3 0 4M11 4c2.500 2 2.500 6 0 8" stroke="#fff" />
            <path d="M13 2.500c3.500 3 3.500 8 0 11" stroke="#888" />
          </Svg>
        </span>
        <span className="ml-2 text-[14px] font-medium">中</span>
        <span className="ml-[14px]">
          <Sogou size={16} />
        </span>
        <div className="ml-5 text-center leading-[19px]">
          8:19
          <br />
          2017/7/9
        </div>
        <button aria-label="通知中心" className="ml-[22px]">
          <Svg size={18} box={18}>
            <path d="M1.500 2.500h15v11H12l-3 3-3-3H1.500z" stroke="#fff" strokeWidth="1.200" />
          </Svg>
        </button>
        <span className="ml-[18px] mr-1 h-10 w-px bg-[#555]" />
      </div>
    </div>
  )
}

export default function App() {
  return (
    <div className={`flex h-screen flex-col overflow-hidden bg-[#f0f0f0] text-[12px] leading-4 text-black ${UI_FONT}`}>
      <TitleBar />
      <MenuBar />
      <MainToolbar />
      <main className="flex min-h-0 flex-1">
        <ModulePanel />
        <div className="ml-[6px] flex min-w-0 flex-1 flex-col">
          <ComponentToolbar />
          <div className="flex min-h-0 flex-1">
            <ComponentPanel />
            <PropertyPanel />
          </div>
        </div>
      </main>
      <StatusBar />
      <Taskbar />
    </div>
  )
}
